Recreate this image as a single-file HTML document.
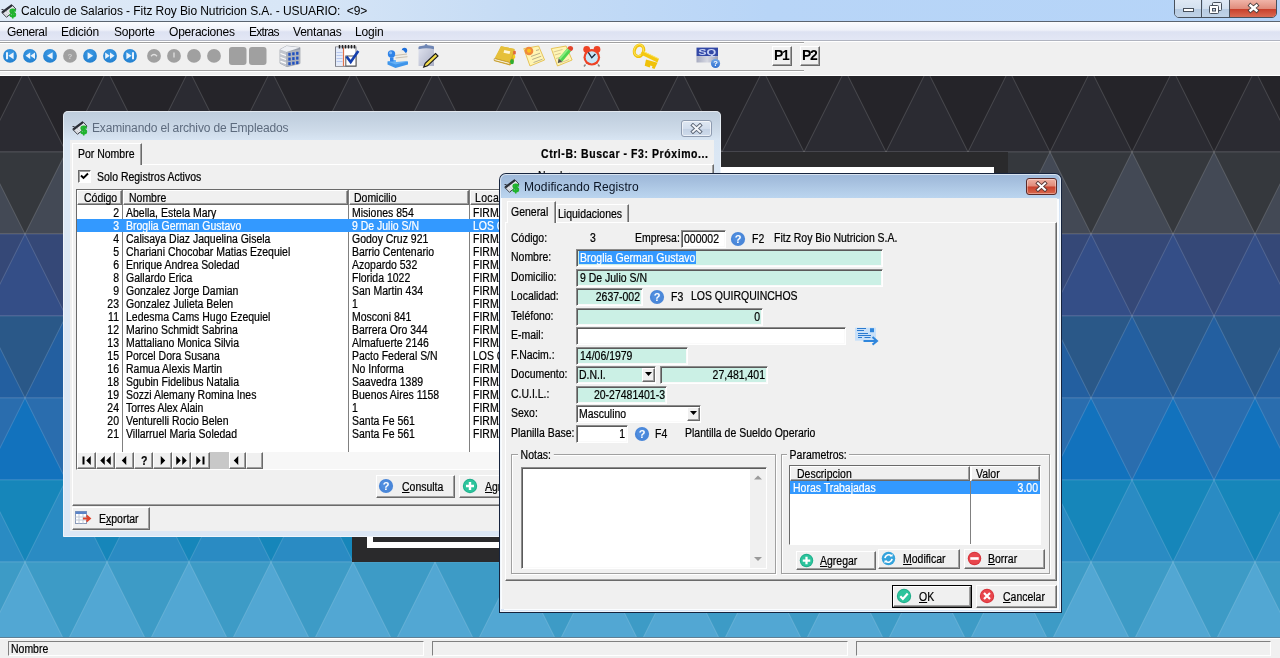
<!DOCTYPE html>
<html lang="es"><head><meta charset="utf-8"><title>Calculo de Salarios</title>
<style>
*{box-sizing:border-box;margin:0;padding:0}
html,body{width:1280px;height:658px;overflow:hidden;background:#f0f0f0}
body{position:relative;font-family:"Liberation Sans",sans-serif;font-size:12px;line-height:13px;color:#000;will-change:transform}
.a{position:absolute;white-space:nowrap}
.bg{position:absolute;left:0;top:0}
.t{position:absolute;white-space:nowrap;height:13px;margin-top:1px;-webkit-text-stroke-width:0.22px;transform:scaleX(.873);transform-origin:0 0}
.s{display:inline-block;position:relative;top:1px;-webkit-text-stroke-width:0.22px;transform:scaleX(.873);transform-origin:0 0}
.r{text-align:right;transform-origin:100% 0}
u{text-decoration:underline;text-underline-offset:1px}
/* main chrome */
#titlebar{left:0;top:0;width:1280px;height:22px;background:linear-gradient(90deg,#deeaf7 0,#d8e6f6 22%,#c6dcf5 40%,#b8d5f7 60%,#b5d4f8 100%);border-bottom:1px solid #5a6470}
#titletext{left:21px;top:4px;font-size:12px;line-height:15px;letter-spacing:-0.08px}
#menubar{left:0;top:22px;width:1280px;height:19px;background:linear-gradient(180deg,#fbfcfe 0,#eef1f9 45%,#dde2f2 55%,#e3e7f5 100%);border-bottom:1px solid #b0b4c0}
.m{position:absolute;top:25px;font-size:12px;line-height:15px;letter-spacing:-0.2px}
#toolbar{left:0;top:41px;width:1280px;height:35px;background:#f0f0f0}
.sunk{background:#cbf0e5;border:1px solid;border-color:#8c8c8c #fff #fff #8c8c8c;box-shadow:inset 1px 1px 0 #5a5a5a,inset -1px -1px 0 #fafafa}
.btn{position:absolute;background:#f0f0f0;border:1px solid;border-color:#fff #6a6a6a #6a6a6a #fff;box-shadow:inset -1px -1px 0 #a0a0a0}
.hdr{position:absolute;background:#f0f0f0;border:1px solid;border-color:#fff #6a6a6a #6a6a6a #fff;box-shadow:inset -1px -1px 0 #a0a0a0;height:15px;padding-left:4px;line-height:13px;white-space:nowrap}
.sel{background:#3399ff;color:#fff}
</style></head><body>

<svg class="bg" width="1280" height="658" viewBox="0 0 1280 658">
<rect x="0" y="70" width="1280" height="82" fill="#252429"/>
<path d="M-57 70L-16 152L-98 152ZM25 70L66 152L-16 152ZM107 70L148 152L66 152ZM189 70L230 152L148 152ZM271 70L312 152L230 152ZM353 70L394 152L312 152ZM435 70L476 152L394 152ZM517 70L558 152L476 152ZM599 70L640 152L558 152ZM681 70L722 152L640 152ZM763 70L804 152L722 152ZM845 70L886 152L804 152ZM927 70L968 152L886 152ZM1009 70L1050 152L968 152ZM1091 70L1132 152L1050 152ZM1173 70L1214 152L1132 152ZM1255 70L1296 152L1214 152Z" fill="#2b2b32" stroke="#ffffff" stroke-opacity="0.16" stroke-width="1"/>
<path d="M0 70H1280" stroke="#ffffff" stroke-opacity="0.12" stroke-width="1"/>
<rect x="0" y="152" width="1280" height="82" fill="#35383d"/>
<path d="M-16 152L25 234L-57 234ZM66 152L107 234L25 234ZM148 152L189 234L107 234ZM230 152L271 234L189 234ZM312 152L353 234L271 234ZM394 152L435 234L353 234ZM476 152L517 234L435 234ZM558 152L599 234L517 234ZM640 152L681 234L599 234ZM722 152L763 234L681 234ZM804 152L845 234L763 234ZM886 152L927 234L845 234ZM968 152L1009 234L927 234ZM1050 152L1091 234L1009 234ZM1132 152L1173 234L1091 234ZM1214 152L1255 234L1173 234ZM1296 152L1337 234L1255 234Z" fill="#434955" stroke="#ffffff" stroke-opacity="0.16" stroke-width="1"/>
<path d="M0 152H1280" stroke="#ffffff" stroke-opacity="0.12" stroke-width="1"/>
<rect x="0" y="234" width="1280" height="82" fill="#354877"/>
<path d="M-57 234L-16 316L-98 316ZM25 234L66 316L-16 316ZM107 234L148 316L66 316ZM189 234L230 316L148 316ZM271 234L312 316L230 316ZM353 234L394 316L312 316ZM435 234L476 316L394 316ZM517 234L558 316L476 316ZM599 234L640 316L558 316ZM681 234L722 316L640 316ZM763 234L804 316L722 316ZM845 234L886 316L804 316ZM927 234L968 316L886 316ZM1009 234L1050 316L968 316ZM1091 234L1132 316L1050 316ZM1173 234L1214 316L1132 316ZM1255 234L1296 316L1214 316Z" fill="#344e87" stroke="#ffffff" stroke-opacity="0.16" stroke-width="1"/>
<path d="M0 234H1280" stroke="#ffffff" stroke-opacity="0.12" stroke-width="1"/>
<rect x="0" y="316" width="1280" height="82" fill="#2a5888"/>
<path d="M-16 316L25 398L-57 398ZM66 316L107 398L25 398ZM148 316L189 398L107 398ZM230 316L271 398L189 398ZM312 316L353 398L271 398ZM394 316L435 398L353 398ZM476 316L517 398L435 398ZM558 316L599 398L517 398ZM640 316L681 398L599 398ZM722 316L763 398L681 398ZM804 316L845 398L763 398ZM886 316L927 398L845 398ZM968 316L1009 398L927 398ZM1050 316L1091 398L1009 398ZM1132 316L1173 398L1091 398ZM1214 316L1255 398L1173 398ZM1296 316L1337 398L1255 398Z" fill="#235fa0" stroke="#ffffff" stroke-opacity="0.16" stroke-width="1"/>
<path d="M0 316H1280" stroke="#ffffff" stroke-opacity="0.12" stroke-width="1"/>
<rect x="0" y="398" width="1280" height="82" fill="#2a6dae"/>
<path d="M-57 398L-16 480L-98 480ZM25 398L66 480L-16 480ZM107 398L148 480L66 480ZM189 398L230 480L148 480ZM271 398L312 480L230 480ZM353 398L394 480L312 480ZM435 398L476 480L394 480ZM517 398L558 480L476 480ZM599 398L640 480L558 480ZM681 398L722 480L640 480ZM763 398L804 480L722 480ZM845 398L886 480L804 480ZM927 398L968 480L886 480ZM1009 398L1050 480L968 480ZM1091 398L1132 480L1050 480ZM1173 398L1214 480L1132 480ZM1255 398L1296 480L1214 480Z" fill="#1272bd" stroke="#ffffff" stroke-opacity="0.16" stroke-width="1"/>
<path d="M0 398H1280" stroke="#ffffff" stroke-opacity="0.12" stroke-width="1"/>
<rect x="0" y="480" width="1280" height="82" fill="#1686ba"/>
<path d="M-16 480L25 562L-57 562ZM66 480L107 562L25 562ZM148 480L189 562L107 562ZM230 480L271 562L189 562ZM312 480L353 562L271 562ZM394 480L435 562L353 562ZM476 480L517 562L435 562ZM558 480L599 562L517 562ZM640 480L681 562L599 562ZM722 480L763 562L681 562ZM804 480L845 562L763 562ZM886 480L927 562L845 562ZM968 480L1009 562L927 562ZM1050 480L1091 562L1009 562ZM1132 480L1173 562L1091 562ZM1214 480L1255 562L1173 562ZM1296 480L1337 562L1255 562Z" fill="#2a8bc3" stroke="#ffffff" stroke-opacity="0.16" stroke-width="1"/>
<path d="M0 480H1280" stroke="#ffffff" stroke-opacity="0.12" stroke-width="1"/>
<rect x="0" y="562" width="1280" height="82" fill="#3d9bc6"/>
<path d="M-57 562L-16 644L-98 644ZM25 562L66 644L-16 644ZM107 562L148 644L66 644ZM189 562L230 644L148 644ZM271 562L312 644L230 644ZM353 562L394 644L312 644ZM435 562L476 644L394 644ZM517 562L558 644L476 644ZM599 562L640 644L558 644ZM681 562L722 644L640 644ZM763 562L804 644L722 644ZM845 562L886 644L804 644ZM927 562L968 644L886 644ZM1009 562L1050 644L968 644ZM1091 562L1132 644L1050 644ZM1173 562L1214 644L1132 644ZM1255 562L1296 644L1214 644Z" fill="#52a7d3" stroke="#ffffff" stroke-opacity="0.16" stroke-width="1"/>
<path d="M0 562H1280" stroke="#ffffff" stroke-opacity="0.12" stroke-width="1"/>
</svg>
<div class="a" style="left:352px;top:152px;width:656px;height:410px;background:#2a2a2c"></div>
<div class="a" style="left:367px;top:167px;width:627px;height:381px;border:6px solid #fff"></div>

<div class="a" id="titlebar"></div>
<div class="a" id="titletext">Calculo de Salarios - Fitz Roy Bio Nutricion S.A. - USUARIO:&nbsp; &lt;9&gt;</div>
<div class="a" id="menubar"></div>
<div class="m" style="left:7px;letter-spacing:-0.4px">General</div>
<div class="m" style="left:61px">Edición</div>
<div class="m" style="left:114px">Soporte</div>
<div class="m" style="left:169px">Operaciones</div>
<div class="m" style="left:249px;letter-spacing:-0.7px">Extras</div>
<div class="m" style="left:293px">Ventanas</div>
<div class="m" style="left:355px">Login</div>
<div class="a" id="toolbar"></div>
<div class="a" style="left:0;top:41px;width:1280px;height:1px;background:#fff"></div>
<div class="a" style="left:0;top:42px;width:804px;height:2px;border-top:1px solid #a0a0a0;border-bottom:1px solid #fff"></div>
<div class="a" style="left:0;top:70px;width:804px;height:2px;border-top:1px solid #a0a0a0;border-bottom:1px solid #fff"></div>
<div class="a" style="left:0;top:75px;width:1280px;height:1px;background:#fff"></div>
<svg class="a" style="left:0;top:42px" width="830" height="30" viewBox="0 42 830 30">
<defs>
<radialGradient id="gb" cx="0.5" cy="0.35" r="0.7"><stop offset="0" stop-color="#3d9be6"/><stop offset="1" stop-color="#1f7dcd"/></radialGradient>
<linearGradient id="gq" x1="0" y1="0" x2="0" y2="1"><stop offset="0" stop-color="#6fa6e8"/><stop offset="1" stop-color="#2f6fd0"/></linearGradient>
</defs>
<g fill="url(#gb)"><circle cx="10" cy="55.9" r="6.9"/><circle cx="30" cy="55.9" r="6.9"/><circle cx="50" cy="55.9" r="6.9"/><circle cx="90" cy="55.9" r="6.9"/><circle cx="110" cy="55.9" r="6.9"/><circle cx="130" cy="55.9" r="6.9"/></g>
<g fill="#a0a0a0"><circle cx="70" cy="55.9" r="6.9"/><circle cx="154" cy="55.9" r="6.9"/><circle cx="174" cy="55.9" r="6.9"/><circle cx="194" cy="55.9" r="6.9"/><circle cx="214" cy="55.9" r="6.9"/>
<rect x="229" y="47" width="17.5" height="18" rx="3"/><rect x="249" y="47" width="17.5" height="18" rx="3"/></g>
<g fill="#eaf4fd">
<path d="M6 52.2h2v7h-2zM13.6 52.2v7l-5.2-3.5z"/>
<path d="M30.2 52.4v6.6l-4.6-3.3zM35 52.4v6.6l-4.6-3.3z"/>
<path d="M52.6 52.2v7l-5.6-3.5z"/>
<path d="M87.6 52.2v7l5.6-3.5z"/>
<path d="M105.2 52.4v6.6l4.6-3.3zM110 52.4v6.6l4.6-3.3z"/>
<path d="M134 52.2h-2v7h2zM126.400 52.2v7l5.2-3.5z"/>
</g>
<text x="70" y="58.5" font-family="Liberation Sans,sans-serif" font-size="8" font-weight="bold" fill="#d0d0d0" text-anchor="middle">?</text>
<path d="M151 56.200q3-3.400 6 0" stroke="#e0e0e0" stroke-width="1.300" fill="none"/>
<path d="M174 52.500v5" stroke="#e0e0e0" stroke-width="1.300" fill="none"/>
<g>
<path d="M280 49.500l6.500-3.500 13.500 1.500v16l-13 3.200-7-3.500z" fill="#9aa0ac" stroke="#8a909c" stroke-width="0.600"/>
<path d="M280 49.500l6.500 2.500v14.700l-6.500-3.500z" fill="#c2c6ce"/>
<path d="M286.500 52l13.500-2.500v14l-13.500 3.200z" fill="#aeb3bd"/>
<path d="M280 49.500l6.500-3.500 13.500 1.500-13.500 4.500z" fill="#eef0f4"/>
<path d="M280.500 53.500l5.500 2M280.500 57.500l5.500 2M280.500 61.300l5.500 2" stroke="#fff" stroke-width="1.300"/>
<g fill="#1f4fc0"><rect x="288.300" y="52.800" width="2.400" height="3"/><rect x="292.200" y="52.300" width="2.400" height="3"/><rect x="296.100" y="51.800" width="2.400" height="3"/>
<rect x="288.300" y="57.600" width="2.400" height="3"/><rect x="292.200" y="57.100" width="2.400" height="3"/><rect x="296.100" y="56.600" width="2.400" height="3"/>
<rect x="288.300" y="62.200" width="2.400" height="3"/><rect x="292.200" y="61.700" width="2.400" height="3"/><rect x="296.100" y="61.200" width="2.400" height="3"/></g>
</g>
<g>
<rect x="335.500" y="47" width="20.500" height="19.300" fill="#fff" stroke="#7c7f8a" stroke-width="1"/>
<rect x="336" y="47.500" width="6.800" height="18.300" fill="#e4ecfb"/>
<path d="M336.500 52.500h6M336.500 55.500h6M336.500 58.500h6M336.500 61.500h6" stroke="#b8c8ee" stroke-width="1"/>
<path d="M343.500 47.500v18.500" stroke="#e0704a" stroke-width="1.200"/>
<path d="M339.500 48.500v-3.500M342.500 48.500v-3.500M345.500 48.500v-3.500M348.500 48.500v-3.500M351.500 48.500v-3.500M354.500 48.500v-3.500" stroke="#222" stroke-width="1.500"/>
<rect x="345.800" y="56" width="10.200" height="10" fill="#fff" stroke="#555" stroke-width="1"/>
<path d="M346.500 56.500l4.200 5.500 7.600-11" stroke="#143fae" stroke-width="2.600" fill="none"/>
</g>
<g>
<path d="M387.500 61.500l7-1.500 13.500 1.500v3l-12.500 3.500-8-3.500z" fill="#3f95ea"/>
<path d="M387.500 61.500l7-1.500 13.500 1.500-12.500 3z" fill="#64b0f6"/>
<circle cx="404.500" cy="50.500" r="2.700" fill="#1d6fdc"/>
<path d="M395 52l8-2 4.500 5-0.500 6-11 1z" fill="#f0ede6"/>
<path d="M395 55.500l12-1.500M395.500 58l12-1.300" stroke="#c8c0b0" stroke-width="1"/>
<circle cx="391.500" cy="54" r="3.700" fill="#2f83e8"/>
<circle cx="390.600" cy="52.800" r="1.500" fill="#7db8f8"/>
<path d="M390 57.500h3.500v4h-3.500z" fill="#2f83e8"/>
</g>
<g>
<defs><linearGradient id="gcl" x1="0" y1="0" x2="1" y2="1"><stop offset="0" stop-color="#e4e7f2"/><stop offset="1" stop-color="#a9aec4"/></linearGradient></defs>
<path d="M418.500 47.500q0-1 1-1.200l5-0.800q0.500-1.500 1.500-1.500t1.500 1.300l5.500 0.700q1 0.200 1 1.200v18.800h-15.500z" fill="url(#gcl)"/>
<path d="M418.500 47.500q0-1 1-1.200l5-0.800q0.500-1.500 1.500-1.500t1.500 1.300l5.500 0.700q1 0.200 1 1.200v2q-7.500-2-15.500 0z" fill="#6f86b4"/>
<path d="M435.500 53.500l2.500 2.500-10.500 9.800-3.800 1.200 1.500-3.600z" fill="#f3dc4a" stroke="#1a1a1a" stroke-width="1.100"/>
</g>
<g>
<path d="M501 46.300l13.500 2.700-0.500 12-4 4.500-16-4.500z" fill="#d9ac2a"/>
<path d="M501 46.300l13.500 2.700-4.800 13-15-4z" fill="#e6c03a"/>
<path d="M494.300 58.500l15.200 4 0.500 2-16-4.200z" fill="#fff8e0" stroke="#b08418" stroke-width="0.600"/>
<path d="M504.300 50l6 1.200-0.800 2.800-6-1.200z" fill="#fff6d8"/>
<rect x="513.200" y="50.800" width="2.600" height="3.600" rx="1" fill="#e0663a"/>
<rect x="512.800" y="55" width="2.400" height="3.600" rx="1" fill="#f2d21a"/>
<ellipse cx="512" cy="61.700" rx="1.900" ry="2.600" fill="#2fae2f"/>
</g>
<g>
<path d="M523.800 48.600l14.800-2.600 6 14-14.600 6z" fill="#fff5b4" stroke="#e6c45a" stroke-width="1"/>
<path d="M531 56.500l9-3.300M532.200 59.500l9-3.300M533.500 62.500l9-3.300M536 50.500l3-0.800" stroke="#b9b08c" stroke-width="1"/>
<circle cx="529" cy="51" r="4.300" fill="#f08a3c"/>
<circle cx="529" cy="50.700" r="2" fill="#fbc21c"/>
</g>
<g>
<path d="M551.300 48.600l14.800-2.600 6 14-14.600 6z" fill="#fff5b4" stroke="#e6c45a" stroke-width="1"/>
<path d="M553.500 52l9-2.500M554.700 55l6-1.700M556 58.500l4-1.200M560 63l9-3.500" stroke="#d9c890" stroke-width="1"/>
<path d="M567.300 48.300l3.700 3-8.700 10.200-3.700-3z" fill="#4fd44f"/>
<path d="M567.300 48.300l1.600 1.300-8.700 10.200-1.600-1.300z" fill="#8aec7e"/>
<path d="M568.500 46.600q2-1.400 3.700 0t0.500 3.400l-1.700 1.300-3.700-3z" fill="#e2452c"/>
<path d="M558.600 58.500l3.700 3-4.500 1.700z" fill="#555"/>
</g>
<g>
<circle cx="586.700" cy="49.500" r="3.400" fill="#ee4326"/><circle cx="597" cy="49.500" r="3.400" fill="#ee4326"/>
<path d="M585.500 64.500l-1.500 2M598 64.500l1.500 2" stroke="#888" stroke-width="1.500"/>
<circle cx="591.800" cy="57.300" r="8.300" fill="#ee4326"/>
<circle cx="591.800" cy="57.300" r="6.100" fill="#c6e6f8"/>
<path d="M588.300 52.300l3.500 5.500 3.600-3.800" stroke="#1a2436" stroke-width="1.300" fill="none"/>
</g>
<g>
<ellipse cx="639" cy="50.800" rx="4.600" ry="5.800" transform="rotate(20 639 50.800)" fill="none" stroke="#f0c20a" stroke-width="3.200"/>
<ellipse cx="638.600" cy="50.400" rx="4.600" ry="5.800" transform="rotate(20 639 50.800)" fill="none" stroke="#fbe25a" stroke-width="1"/>
<path d="M642.500 50.800l16.500 8-1.600 3.600-16.500-8z" fill="#f4c810"/>
<path d="M646 59.500l11.500 3.200-3 6.300-2.600-1 0.600-1.800-2.100-0.700-0.700 1.900-5-1.700z" fill="#f0c20a"/>
<path d="M643.500 51.500l15 7.200" stroke="#fbe46a" stroke-width="1"/>
</g>
<g>
<defs><linearGradient id="gsq" x1="0" y1="0" x2="1" y2="0"><stop offset="0" stop-color="#a7abc0"/><stop offset="0.500" stop-color="#d6d8e2"/><stop offset="1" stop-color="#9a9eb6"/></linearGradient></defs>
<rect x="696.500" y="47.600" width="21.500" height="8.600" fill="#3348a6"/>
<rect x="696.500" y="56.200" width="21.500" height="6.300" fill="url(#gsq)"/>
<text x="707.200" y="54.600" font-family="Liberation Sans,sans-serif" font-size="8.500" font-weight="bold" fill="#c9d3f4" text-anchor="middle" textLength="18" lengthAdjust="spacingAndGlyphs">SQ</text>
<circle cx="715.500" cy="63.500" r="4.600" fill="url(#gq)"/>
<text x="715.500" y="66.300" font-family="Liberation Sans,sans-serif" font-size="7.500" font-weight="bold" fill="#fff" text-anchor="middle">?</text>
</g>

</svg>

<div class="btn" style="left:772px;top:46px;width:20px;height:20px"></div>
<div class="a" style="left:774px;top:48px;font-size:14px;line-height:15px;font-weight:bold;letter-spacing:-1.3px">P1</div>
<div class="btn" style="left:800px;top:46px;width:20px;height:20px"></div>
<div class="a" style="left:802px;top:48px;font-size:14px;line-height:15px;font-weight:bold;letter-spacing:-1.3px">P2</div>
<svg class="a" style="left:1px;top:4px" width="16" height="16" viewBox="0 0 16 16"><path d="M11 0.800L0.800 8.500l4.700 4.800L15 5.200z" fill="#e4e6ea" stroke="#2a2e36" stroke-width="0.900"/><path d="M11 1.200L1.200 8.500" stroke="#2a2e36" stroke-width="2.200"/><path d="M3.500 8.800l3.500 3.300M5.300 7.500l3.500 3.300" stroke="#9a9ea8" stroke-width="0.800" stroke-dasharray="1 1"/><path d="M0.500 5.500h2" stroke="#2a2e36" stroke-width="0.900"/><text x="11.600" y="13" font-family="Liberation Sans,sans-serif" font-size="11.500" font-weight="bold" fill="#1fb32c" text-anchor="middle" stroke="#1fb32c" stroke-width="0.900">$</text></svg>
<div class="a" style="left:1174px;top:-1px;width:103px;height:19px;border:1px solid #47505c;border-radius:0 0 5px 5px;overflow:hidden;background:#c4d6ea">
<div class="a" style="left:0;top:0;width:27px;height:18px;background:linear-gradient(180deg,#dfe9f5 0,#d3e0ef 48%,#b7cbe2 52%,#c2d4e8 100%);border-right:1px solid #47505c"></div>
<div class="a" style="left:28px;top:0;width:27px;height:18px;background:linear-gradient(180deg,#dfe9f5 0,#d3e0ef 48%,#b7cbe2 52%,#c2d4e8 100%);border-right:1px solid #47505c"></div>
<div class="a" style="left:55px;top:0;width:47px;height:18px;background:linear-gradient(180deg,#f0b4a8 0,#e08c7c 48%,#c8402c 52%,#dc7058 100%)"></div>
</div>
<svg class="a" style="left:1174px;top:0" width="103" height="18" viewBox="0 0 103 18"><rect x="9.500" y="8.500" width="10" height="3" fill="#fff" stroke="#47505c"/><rect x="38.500" y="2.500" width="9" height="8" rx="1" fill="#eef3f9" stroke="#47505c"/><rect x="35.500" y="5.500" width="9" height="8" rx="1" fill="#fff" stroke="#47505c"/><rect x="38.500" y="8.500" width="3" height="2.500" fill="#c8d6e8" stroke="#47505c"/><path d="M76.500 5.500l6 5M82.500 5.500l-6 5" stroke="#4a4040" stroke-width="4.200" stroke-linecap="square"/><path d="M76.500 5.500l6 5M82.500 5.500l-6 5" stroke="#fff" stroke-width="2.400" stroke-linecap="square"/></svg>


<div class="a" style="left:0;top:637px;width:1280px;height:21px;background:#f0f0f0;border-top:1px solid #5f7f94;box-shadow:inset 0 1px 0 #fff"></div>
<div class="a" style="left:8px;top:641px;width:416px;height:15px;border:1px solid;border-color:#808080 #fff #fff #808080"></div>
<div class="a" style="left:432px;top:641px;width:416px;height:15px;border:1px solid;border-color:#808080 #fff #fff #808080"></div>
<div class="a" style="left:856px;top:641px;width:415px;height:15px;border:1px solid;border-color:#808080 #fff #fff #808080"></div>
<div class="t" style="left:11px;top:642px">Nombre</div>

<div class="a" style="left:63px;top:111px;width:658px;height:426px;border-radius:5px 5px 1px 1px;background:linear-gradient(180deg,#becddc 0,#c5d3e2 10px,#cedbe9 20px,#d8e5f3 29px,#dbe7f4 45px,#dce7f5 100%);box-shadow:inset 0 0 0 1px rgba(255,255,255,.55)"></div>
<svg class="a" style="left:72px;top:121px" width="16" height="16" viewBox="0 0 16 16"><path d="M11 0.800L0.800 8.500l4.700 4.800L15 5.200z" fill="#e4e6ea" stroke="#2a2e36" stroke-width="0.900"/><path d="M11 1.200L1.200 8.500" stroke="#2a2e36" stroke-width="2.200"/><path d="M3.500 8.800l3.500 3.300M5.300 7.500l3.500 3.300" stroke="#9a9ea8" stroke-width="0.800" stroke-dasharray="1 1"/><path d="M0.500 5.500h2" stroke="#2a2e36" stroke-width="0.900"/><text x="11.600" y="13" font-family="Liberation Sans,sans-serif" font-size="11.500" font-weight="bold" fill="#1fb32c" text-anchor="middle" stroke="#1fb32c" stroke-width="0.900">$</text></svg>
<div class="a" style="left:92px;top:121px;font-size:12px;line-height:15px;letter-spacing:-0.15px;color:#5d6b7e">Examinando el archivo de Empleados</div>
<div class="a" style="left:681px;top:120px;width:31px;height:17px;border:1px solid #8e9bb0;border-radius:3px;background:linear-gradient(180deg,#dfe8f3 0,#d2dded 50%,#c3d1e4 51%,#cfdbeb 100%);box-shadow:inset 0 0 0 1px rgba(255,255,255,.6)"></div>
<svg class="a" style="left:690px;top:123px" width="13" height="11" viewBox="0 0 13 11"><path d="M3 2.300l7 6.400M10 2.300l-7 6.400" stroke="#5c6676" stroke-width="3.800" stroke-linecap="square"/><path d="M3 2.300l7 6.400M10 2.300l-7 6.400" stroke="#f4f6fa" stroke-width="2" stroke-linecap="square"/></svg>
<div class="a" style="left:70px;top:140px;width:644px;height:391px;background:#f0f0f0"></div>
<div class="a" style="left:72px;top:164px;width:642px;height:342px;border:1px solid;border-color:#fff #6a6a6a #6a6a6a #fff;box-shadow:inset -1px -1px 0 #a0a0a0"></div>
<div class="a" style="left:72px;top:143px;width:70px;height:22px;background:#f0f0f0;border:1px solid;border-color:#fff #6a6a6a #f0f0f0 #fff;border-bottom:0;box-shadow:inset -1px 0 0 #a0a0a0"></div>
<div class="t" style="left:78px;top:147px">Por Nombre</div>
<div class="t" style="left:541px;top:147px;font-weight:bold;letter-spacing:0.66px">Ctrl-B: Buscar - F3: Próximo...</div>
<div class="t" style="left:538px;top:169px">Nombre:</div>
<div class="a" style="left:78px;top:170px;width:13px;height:13px;background:#fff;border:1px solid;border-color:#6a6a6a #fff #fff #6a6a6a;box-shadow:inset 1px 1px 0 #a0a0a0"></div>
<svg class="a" style="left:80px;top:172px" width="9" height="9" viewBox="0 0 9 9"><path d="M1 3.500l2.500 2.500 4.500-4.500" stroke="#000" stroke-width="1.900" fill="none"/></svg>
<div class="t" style="left:97px;top:170px">Solo Registros Activos</div>
<div class="a" style="left:76px;top:189px;width:637px;height:281px;background:#fff;border:1px solid;border-color:#6a6a6a #fff #fff #6a6a6a"></div>
<div class="hdr" style="left:77px;top:190px;width:45px;padding-left:6px"><span class="s">Código</span></div>
<div class="hdr" style="left:123px;top:190px;width:225px;padding-left:5px"><span class="s">Nombre</span></div>
<div class="hdr" style="left:349px;top:190px;width:120px;padding-left:4px"><span class="s">Domicilio</span></div>
<div class="hdr" style="left:470px;top:190px;width:120px;padding-left:4px"><span class="s" style="letter-spacing:.4px">Localidad</span></div>
<div class="a" style="left:122px;top:190px;width:1px;height:262px;background:#808080"></div>
<div class="a" style="left:348px;top:190px;width:1px;height:262px;background:#808080"></div>
<div class="a" style="left:469px;top:190px;width:1px;height:262px;background:#808080"></div>
<div class="t r" style="left:77px;width:42px;top:206px">2</div><div class="t" style="left:126px;top:206px">Abella, Estela Mary</div><div class="t" style="left:352px;top:206px">Misiones 854</div><div class="t" style="left:473px;top:206px">FIRMAT</div>
<div class="a sel" style="left:77px;top:219px;width:636px;height:13px"></div>
<div class="t r" style="left:77px;width:42px;top:219px;color:#fff">3</div><div class="t" style="left:126px;top:219px;color:#fff">Broglia German Gustavo</div><div class="t" style="left:352px;top:219px;color:#fff">9 De Julio S/N</div><div class="t" style="left:473px;top:219px;color:#fff">LOS QUIRQUINCHOS</div>
<div class="t r" style="left:77px;width:42px;top:232px">4</div><div class="t" style="left:126px;top:232px">Calisaya Diaz Jaquelina Gisela</div><div class="t" style="left:352px;top:232px">Godoy Cruz 921</div><div class="t" style="left:473px;top:232px">FIRMAT</div>
<div class="t r" style="left:77px;width:42px;top:245px">5</div><div class="t" style="left:126px;top:245px">Chariani Chocobar Matias Ezequiel</div><div class="t" style="left:352px;top:245px">Barrio Centenario</div><div class="t" style="left:473px;top:245px">FIRMAT</div>
<div class="t r" style="left:77px;width:42px;top:258px">6</div><div class="t" style="left:126px;top:258px">Enrique Andrea Soledad</div><div class="t" style="left:352px;top:258px">Azopardo 532</div><div class="t" style="left:473px;top:258px">FIRMAT</div>
<div class="t r" style="left:77px;width:42px;top:271px">8</div><div class="t" style="left:126px;top:271px">Gallardo Erica</div><div class="t" style="left:352px;top:271px">Florida 1022</div><div class="t" style="left:473px;top:271px">FIRMAT</div>
<div class="t r" style="left:77px;width:42px;top:284px">9</div><div class="t" style="left:126px;top:284px">Gonzalez Jorge Damian</div><div class="t" style="left:352px;top:284px">San Martin 434</div><div class="t" style="left:473px;top:284px">FIRMAT</div>
<div class="t r" style="left:77px;width:42px;top:297px">23</div><div class="t" style="left:126px;top:297px">Gonzalez Julieta Belen</div><div class="t" style="left:352px;top:297px">1</div><div class="t" style="left:473px;top:297px">FIRMAT</div>
<div class="t r" style="left:77px;width:42px;top:310px">11</div><div class="t" style="left:126px;top:310px">Ledesma Cams Hugo Ezequiel</div><div class="t" style="left:352px;top:310px">Mosconi 841</div><div class="t" style="left:473px;top:310px">FIRMAT</div>
<div class="t r" style="left:77px;width:42px;top:323px">12</div><div class="t" style="left:126px;top:323px">Marino Schmidt Sabrina</div><div class="t" style="left:352px;top:323px">Barrera Oro 344</div><div class="t" style="left:473px;top:323px">FIRMAT</div>
<div class="t r" style="left:77px;width:42px;top:336px">13</div><div class="t" style="left:126px;top:336px">Mattaliano Monica Silvia</div><div class="t" style="left:352px;top:336px">Almafuerte 2146</div><div class="t" style="left:473px;top:336px">FIRMAT</div>
<div class="t r" style="left:77px;width:42px;top:349px">15</div><div class="t" style="left:126px;top:349px">Porcel Dora Susana</div><div class="t" style="left:352px;top:349px">Pacto Federal S/N</div><div class="t" style="left:473px;top:349px">LOS QUIRQUINCHOS</div>
<div class="t r" style="left:77px;width:42px;top:362px">16</div><div class="t" style="left:126px;top:362px">Ramua Alexis Martin</div><div class="t" style="left:352px;top:362px">No Informa</div><div class="t" style="left:473px;top:362px">FIRMAT</div>
<div class="t r" style="left:77px;width:42px;top:375px">18</div><div class="t" style="left:126px;top:375px">Sgubin Fidelibus Natalia</div><div class="t" style="left:352px;top:375px">Saavedra 1389</div><div class="t" style="left:473px;top:375px">FIRMAT</div>
<div class="t r" style="left:77px;width:42px;top:388px">19</div><div class="t" style="left:126px;top:388px">Sozzi Alemany Romina Ines</div><div class="t" style="left:352px;top:388px">Buenos Aires 1158</div><div class="t" style="left:473px;top:388px">FIRMAT</div>
<div class="t r" style="left:77px;width:42px;top:401px">24</div><div class="t" style="left:126px;top:401px">Torres Alex Alain</div><div class="t" style="left:352px;top:401px">1</div><div class="t" style="left:473px;top:401px">FIRMAT</div>
<div class="t r" style="left:77px;width:42px;top:414px">20</div><div class="t" style="left:126px;top:414px">Venturelli Rocio Belen</div><div class="t" style="left:352px;top:414px">Santa Fe 561</div><div class="t" style="left:473px;top:414px">FIRMAT</div>
<div class="t r" style="left:77px;width:42px;top:427px">21</div><div class="t" style="left:126px;top:427px">Villarruel Maria Soledad</div><div class="t" style="left:352px;top:427px">Santa Fe 561</div><div class="t" style="left:473px;top:427px">FIRMAT</div>
<div class="a" style="left:77px;top:452px;width:636px;height:17px;background:#f7f7f7"></div>
<div class="a" style="left:210px;top:452px;width:19px;height:17px;background:#c8c8c8"></div>
<div class="btn" style="left:77px;top:452px;width:19px;height:17px"></div>
<div class="btn" style="left:96px;top:452px;width:19px;height:17px"></div>
<div class="btn" style="left:115px;top:452px;width:19px;height:17px"></div>
<div class="btn" style="left:134px;top:452px;width:19px;height:17px"></div>
<div class="btn" style="left:153px;top:452px;width:19px;height:17px"></div>
<div class="btn" style="left:172px;top:452px;width:19px;height:17px"></div>
<div class="btn" style="left:191px;top:452px;width:19px;height:17px"></div>
<div class="btn" style="left:229px;top:452px;width:17px;height:17px"></div>
<div class="btn" style="left:246px;top:452px;width:17px;height:17px"></div>
<svg class="a" style="left:0;top:0" width="280" height="480" viewBox="0 0 280 480"><path d="M82.5 456.5h2v8h-2zM90.75 456.0L90.75 465.0L86.25 460.5ZM104.75 456.0L104.75 465.0L100.25 460.5ZM110.75 456.0L110.75 465.0L106.25 460.5ZM126.25 456.0L126.25 465.0L121.75 460.5ZM160.75 456.0L160.75 465.0L165.25 460.5ZM176.25 456.0L176.25 465.0L180.75 460.5ZM182.25 456.0L182.25 465.0L186.75 460.5ZM196.25 456.0L196.25 465.0L200.75 460.5ZM202.5 456.5h2v8h-2zM238.25 456.0L238.25 465.0L233.75 460.5Z" fill="#000"/></svg>
<div class="t" style="left:141px;top:454px;font-weight:bold;letter-spacing:0">?</div>
<div class="btn" style="left:376px;top:475px;width:79px;height:23px"></div>
<svg class="a" style="left:378px;top:478px" width="16" height="16" viewBox="0 0 16 16"><circle cx="8" cy="8" r="7.100" fill="#4a87d9"/><circle cx="7.300" cy="7" r="4.500" fill="#5592e2" opacity="0.600"/><text x="8" y="12" font-family="Liberation Sans,sans-serif" font-size="11" font-weight="bold" fill="#fff" text-anchor="middle">?</text></svg>
<div class="t" style="left:402px;top:480px"><u>C</u>onsulta</div>
<div class="btn" style="left:459px;top:475px;width:79px;height:23px"></div>
<svg class="a" style="left:462px;top:478px" width="16" height="16" viewBox="0 0 16 16"><circle cx="8" cy="8" r="7.200" fill="#1faf8c"/><circle cx="8" cy="8" r="6.200" fill="#2cc49c"/><path d="M8 4v8M4 8h8" stroke="#fff" stroke-width="2.400"/></svg>
<div class="t" style="left:485px;top:480px"><u>A</u>gregar</div>
<div class="btn" style="left:72px;top:507px;width:78px;height:23px"></div>
<svg class="a" style="left:75px;top:510px" width="18" height="16" viewBox="0 0 18 16"><rect x="0.500" y="1.500" width="11" height="12" fill="#fff" stroke="#8a9ab8"/><rect x="0.500" y="1.500" width="11" height="2.500" fill="#5b84c8"/><path d="M0.500 7h11M0.500 10h11M4 4v9.500M8 4v9.500" stroke="#c4cbd8" stroke-width="1"/><path d="M8 8.500h6M11.500 5.500l3.500 3-3.500 3" stroke="#e0442c" stroke-width="1.800" fill="none"/></svg>
<div class="t" style="left:99px;top:512px">E<u>x</u>portar</div>

<div class="a" style="left:499px;top:173px;width:563px;height:440px;border-radius:7px 7px 0 0;background:#16243e"></div>
<div class="a" style="left:500px;top:174px;width:561px;height:438px;border-radius:6px 6px 0 0;background:linear-gradient(180deg,#9db8d9 0,#a5bfde 7px,#b0cae6 15px,#bbd5ef 24px,#cfe0f3 25px,#d8e6f6 40px,#d8e6f6 100%);box-shadow:inset 0 0 0 1px rgba(255,255,255,.6)"></div>
<div class="a" style="left:502px;top:198px;width:555px;height:411px;background:#f0f0f0;box-shadow:2px 1px 0 #fbfdff,-1px 0 0 #fbfdff"></div>
<svg class="a" style="left:504px;top:179px" width="16" height="16" viewBox="0 0 16 16"><path d="M11 0.800L0.800 8.500l4.700 4.800L15 5.200z" fill="#e4e6ea" stroke="#2a2e36" stroke-width="0.900"/><path d="M11 1.200L1.200 8.500" stroke="#2a2e36" stroke-width="2.200"/><path d="M3.500 8.800l3.500 3.300M5.300 7.500l3.500 3.300" stroke="#9a9ea8" stroke-width="0.800" stroke-dasharray="1 1"/><path d="M0.500 5.500h2" stroke="#2a2e36" stroke-width="0.900"/><text x="11.600" y="13" font-family="Liberation Sans,sans-serif" font-size="11.500" font-weight="bold" fill="#1fb32c" text-anchor="middle" stroke="#1fb32c" stroke-width="0.900">$</text></svg>
<div class="a" style="left:524px;top:180px;font-size:12px;line-height:15px;letter-spacing:0.1px;color:#0a1424">Modificando Registro</div>
<div class="a" style="left:1026px;top:178px;width:31px;height:17px;border:1px solid #5a2a28;border-radius:3px;background:linear-gradient(180deg,#eeb0a2 0,#e08a78 48%,#c8402c 52%,#d8684c 100%);box-shadow:inset 0 0 0 1px rgba(255,255,255,.35)"></div>
<svg class="a" style="left:1035px;top:181px" width="13" height="11" viewBox="0 0 13 11"><path d="M3 2.300l7 6.400M10 2.300l-7 6.400" stroke="#5a3a38" stroke-width="3.800" stroke-linecap="square"/><path d="M3 2.300l7 6.400M10 2.300l-7 6.400" stroke="#fff" stroke-width="2" stroke-linecap="square"/></svg>
<div class="a" style="left:505px;top:222px;width:552px;height:359px;border:1px solid;border-color:#fff #6a6a6a #6a6a6a #fff;box-shadow:inset -1px -1px 0 #a0a0a0"></div>
<div class="a" style="left:556px;top:204px;width:73px;height:18px;border:1px solid;border-color:#fff #6a6a6a transparent #fff;border-bottom:0;box-shadow:inset -1px 0 0 #a0a0a0"></div>
<div class="a" style="left:507px;top:201px;width:49px;height:22px;background:#f0f0f0;border:1px solid;border-color:#fff #6a6a6a #f0f0f0 #fff;border-bottom:0;box-shadow:inset -1px 0 0 #a0a0a0"></div>
<div class="t" style="left:511px;top:205px">General</div>
<div class="t" style="left:558px;top:207px">Liquidaciones</div>
<div class="t" style="left:511px;top:231px">Código:</div>
<div class="t" style="left:590px;top:231px">3</div>
<div class="t" style="left:635px;top:231px">Empresa:</div>
<div class="t" style="left:511px;top:250px">Nombre:</div>
<div class="t" style="left:511px;top:270px">Domicilio:</div>
<div class="t" style="left:511px;top:289px">Localidad:</div>
<div class="t" style="left:511px;top:309px">Teléfono:</div>
<div class="t" style="left:511px;top:328px">E-mail:</div>
<div class="t" style="left:511px;top:348px">F.Nacim.:</div>
<div class="t" style="left:511px;top:367px">Documento:</div>
<div class="t" style="left:511px;top:387px">C.U.I.L.:</div>
<div class="t" style="left:511px;top:406px">Sexo:</div>
<div class="t" style="left:511px;top:426px">Planilla Base:</div>
<div class="a sunk" style="left:681px;top:230px;width:45px;height:18px;background:#fff"></div>
<div class="t" style="left:684px;top:232px">000002</div>
<svg class="a" style="left:730px;top:231px" width="16" height="16" viewBox="0 0 16 16"><circle cx="8" cy="8" r="7.100" fill="#4a87d9"/><circle cx="7.300" cy="7" r="4.500" fill="#5592e2" opacity="0.600"/><text x="8" y="12" font-family="Liberation Sans,sans-serif" font-size="11" font-weight="bold" fill="#fff" text-anchor="middle">?</text></svg>
<div class="t" style="left:752px;top:232px">F2</div>
<div class="t" style="left:774px;top:231px">Fitz Roy Bio Nutricion S.A.</div>

<div class="a sunk" style="left:576px;top:249px;width:307px;height:18px"></div>
<div class="a sel" style="left:579px;top:251px;width:117px;height:13px"></div>
<div class="t" style="left:580px;top:251px;color:#fff">Broglia German Gustavo</div>
<div class="a sunk" style="left:576px;top:269px;width:307px;height:18px"></div>
<div class="t" style="left:580px;top:271px">9 De Julio S/N</div>
<div class="a sunk" style="left:576px;top:288px;width:67px;height:18px"></div>
<div class="t r" style="left:578px;width:62px;top:290px">2637-002</div>
<svg class="a" style="left:649px;top:289px" width="16" height="16" viewBox="0 0 16 16"><circle cx="8" cy="8" r="7.100" fill="#4a87d9"/><circle cx="7.300" cy="7" r="4.500" fill="#5592e2" opacity="0.600"/><text x="8" y="12" font-family="Liberation Sans,sans-serif" font-size="11" font-weight="bold" fill="#fff" text-anchor="middle">?</text></svg>
<div class="t" style="left:671px;top:290px">F3</div>
<div class="t" style="left:691px;top:289px">LOS QUIRQUINCHOS</div>
<div class="a sunk" style="left:576px;top:308px;width:187px;height:18px"></div>
<div class="t r" style="left:578px;width:182px;top:310px">0</div>
<div class="a sunk" style="left:576px;top:327px;width:270px;height:18px;background:#fff"></div>
<svg class="a" style="left:855px;top:327px" width="24" height="19" viewBox="0 0 24 19"><rect x="0" y="0.700" width="21" height="13" fill="#c8e0f8"/><path d="M2 1.500h9M2 3.500h7M3 6.500h10M3 8.500h13M3 10.500h4M9.500 10.500h6" stroke="#2a7ad0" stroke-width="1.100"/><rect x="15" y="1.200" width="4" height="4" fill="#2f86dc"/><path d="M8.500 14h13M17.500 10l4.500 4-4.500 3.600" stroke="#2f86dc" stroke-width="2" fill="none"/></svg>
<div class="a sunk" style="left:576px;top:347px;width:112px;height:18px"></div>
<div class="t" style="left:580px;top:349px">14/06/1979</div>
<div class="a sunk" style="left:576px;top:366px;width:80px;height:18px"></div>
<div class="t" style="left:579px;top:368px">D.N.I.</div>
<div class="btn" style="left:642px;top:368px;width:13px;height:14px"></div>
<svg class="a" style="left:645px;top:372px" width="7" height="5" viewBox="0 0 7 5"><path d="M0 0h7l-3.500 4z" fill="#000"/></svg>
<div class="a sunk" style="left:660px;top:366px;width:108px;height:18px"></div>
<div class="t r" style="left:662px;width:103px;top:368px">27,481,401</div>
<div class="a sunk" style="left:576px;top:386px;width:91px;height:18px"></div>
<div class="t r" style="left:578px;width:87px;top:388px">20-27481401-3</div>
<div class="a sunk" style="left:576px;top:405px;width:125px;height:18px;background:#fff"></div>
<div class="t" style="left:579px;top:407px">Masculino</div>
<div class="btn" style="left:687px;top:407px;width:13px;height:14px"></div>
<svg class="a" style="left:690px;top:411px" width="7" height="5" viewBox="0 0 7 5"><path d="M0 0h7l-3.500 4z" fill="#000"/></svg>
<div class="a sunk" style="left:576px;top:425px;width:52px;height:18px;background:#fff"></div>
<div class="t r" style="left:578px;width:47px;top:427px">1</div>
<svg class="a" style="left:634px;top:426px" width="16" height="16" viewBox="0 0 16 16"><circle cx="8" cy="8" r="7.100" fill="#4a87d9"/><circle cx="7.300" cy="7" r="4.500" fill="#5592e2" opacity="0.600"/><text x="8" y="12" font-family="Liberation Sans,sans-serif" font-size="11" font-weight="bold" fill="#fff" text-anchor="middle">?</text></svg>
<div class="t" style="left:655px;top:427px">F4</div>
<div class="t" style="left:685px;top:426px">Plantilla de Sueldo Operario</div>
<div class="a" style="left:511px;top:454px;width:265px;height:120px;border:1px solid #a0a0a0;box-shadow:1px 1px 0 #fff,inset 1px 1px 0 #fff"></div>
<div class="t" style="left:518px;top:448px;background:#f0f0f0;padding:0 3px">Notas:</div>
<div class="a sunk" style="left:521px;top:467px;width:246px;height:102px;background:#fff"></div>
<div class="a" style="left:750px;top:469px;width:16px;height:99px;background:#f0f0f0"></div>
<svg class="a" style="left:754px;top:475px" width="8" height="90" viewBox="0 0 8 90"><path d="M0 4.500h8l-4-4z" fill="#9a9a9a"/><path d="M0 82h8l-4 4z" fill="#9a9a9a"/></svg>
<div class="a" style="left:781px;top:454px;width:269px;height:120px;border:1px solid #a0a0a0;box-shadow:1px 1px 0 #fff,inset 1px 1px 0 #fff"></div>
<div class="t" style="left:787px;top:448px;background:#f0f0f0;padding:0 3px">Parametros:</div>
<div class="a" style="left:789px;top:465px;width:252px;height:80px;background:#fff;border:1px solid;border-color:#6a6a6a #fff #fff #6a6a6a"></div>
<div class="hdr" style="left:790px;top:466px;width:180px;padding-left:6px"><span class="s">Descripcion</span></div>
<div class="hdr" style="left:971px;top:466px;width:69px;padding-left:4px"><span class="s">Valor</span></div>
<div class="a" style="left:970px;top:481px;width:1px;height:63px;background:#808080"></div>
<div class="a sel" style="left:790px;top:481px;width:180px;height:13px"></div>
<div class="a sel" style="left:971px;top:481px;width:69px;height:13px"></div>
<div class="t" style="left:793px;top:481px;color:#fff">Horas Trabajadas</div>
<div class="t r" style="left:971px;width:67px;top:481px;color:#fff">3.00</div>
<div class="btn" style="left:796px;top:551px;width:80px;height:19px"></div>
<svg class="a" style="left:799px;top:553px" width="15" height="15" viewBox="0 0 16 16"><circle cx="8" cy="8" r="7.200" fill="#1faf8c"/><circle cx="8" cy="8" r="6.200" fill="#2cc49c"/><path d="M8 4v8M4 8h8" stroke="#fff" stroke-width="2.400"/></svg>
<div class="t" style="left:820px;top:554px"><u>A</u>gregar</div>
<div class="btn" style="left:878px;top:549px;width:82px;height:20px"></div>
<svg class="a" style="left:881px;top:551px" width="15" height="15" viewBox="0 0 16 16"><circle cx="8" cy="8" r="7.200" fill="#34a3dc"/><path d="M4.200 7.500a4 4 0 0 1 6.800-2.300M11.800 8.500a4 4 0 0 1-6.800 2.300" stroke="#fff" stroke-width="1.800" fill="none"/><path d="M9.300 5.800h3v-3zM6.700 10.200h-3v3z" fill="#fff"/></svg>
<div class="t" style="left:903px;top:552px"><u>M</u>odificar</div>
<div class="btn" style="left:964px;top:549px;width:81px;height:20px"></div>
<svg class="a" style="left:967px;top:551px" width="15" height="15" viewBox="0 0 16 16"><circle cx="8" cy="8" r="7.200" fill="#d8343c"/><circle cx="8" cy="8" r="6.200" fill="#e8464c"/><path d="M3.500 8h9" stroke="#fff" stroke-width="2.800"/></svg>
<div class="t" style="left:988px;top:552px"><u>B</u>orrar</div>
<div class="a" style="left:892px;top:585px;width:80px;height:23px;background:#000"></div>
<div class="btn" style="left:893px;top:586px;width:78px;height:21px"></div>
<svg class="a" style="left:896px;top:588px" width="16" height="16" viewBox="0 0 16 16"><circle cx="8" cy="8" r="7.200" fill="#22ac8a"/><circle cx="8" cy="8" r="6.200" fill="#2cc49c"/><path d="M4.300 8.200l2.600 2.700 4.800-5.300" stroke="#fff" stroke-width="2.200" fill="none"/></svg>
<div class="t" style="left:919px;top:590px"><u>O</u>K</div>
<div class="btn" style="left:976px;top:585px;width:81px;height:23px"></div>
<svg class="a" style="left:979px;top:588px" width="16" height="16" viewBox="0 0 16 16"><circle cx="8" cy="8" r="7.200" fill="#d8343c"/><circle cx="8" cy="8" r="6.200" fill="#e8464c"/><path d="M5 5l6 6M11 5l-6 6" stroke="#fff" stroke-width="2.200"/></svg>
<div class="t" style="left:1003px;top:590px"><u>C</u>ancelar</div>

</body></html>
